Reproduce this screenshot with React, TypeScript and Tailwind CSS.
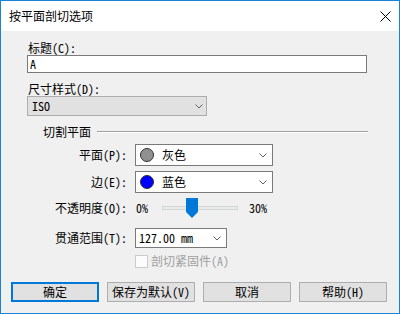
import React from "react";

const mono = "font-['Noto_Sans_Mono_CJK_SC','Noto_Sans_CJK_SC',monospace]";

function Chevron({ className = "" }: { className?: string }) {
  return (
    <svg width="8" height="5" viewBox="0 0 8 5" className={className}>
      <path d="M0.5 0.5 L4 4 L7.5 0.5" fill="none" stroke="#606060" strokeWidth="1" />
    </svg>
  );
}

function ColorCombo({ color, label }: { color: string; label: string }) {
  return (
    <div className="ml-[8px] flex h-[22px] w-[138px] items-center border border-[#7a7a7a] bg-white pl-[4px] pr-[5px]">
      <span
        className="h-[14px] w-[14px] rounded-full border border-[#303030]"
        style={{ backgroundColor: color }}
      />
      <span className="ml-[8px] flex-1 text-[12px] leading-[14px]">{label}</span>
      <Chevron />
    </div>
  );
}

export default function App() {
  return (
    <div
      className={`flex h-[314px] w-[400px] flex-col border border-[#1883d7] bg-[#f0f0f0] text-black ${mono}`}
    >
      {/* Title bar */}
      <div className="flex h-[30px] items-center justify-between bg-white pl-[8px] pr-[8px]">
        <span className="font-['Noto_Sans_CJK_SC',sans-serif] text-[12px] leading-[16px]">
          按平面剖切选项
        </span>
        <svg width="11" height="11" viewBox="0 0 11 11">
          <path d="M0.5 0.5 L10.5 10.5 M10.5 0.5 L0.5 10.5" stroke="#000" strokeWidth="1" />
        </svg>
      </div>

      {/* Form */}
      <div className="flex flex-col pl-[26px] pr-[32px] text-[12px]">
        <div className="mt-[9px] h-[15px] pl-[1px] leading-[15px]">标题(C):</div>
        <div className="flex h-[18px] items-center border border-[#7a7a7a] bg-white px-[2px] leading-[14px]">
          A
        </div>

        <div className="mt-[8px] h-[15px] pl-[1px] leading-[15px]">尺寸样式(D):</div>
        <div className="flex h-[20px] w-[180px] items-center justify-between border border-[#adadad] bg-[#e1e1e1] pl-[4px] pr-[3px] leading-[14px]">
          <span>ISO</span>
          <Chevron />
        </div>

        {/* Group header */}
        <div className="mt-[8px] flex h-[16px] items-center pl-[16px]">
          <span className="leading-[16px]">切割平面</span>
          <div className="ml-[6px] mr-[-1px] h-[2px] flex-1 border-t border-b border-t-[#a0a0a0] border-b-white" />
        </div>

        <div className="mt-[4px] flex items-center">
          <span className="w-[100px] text-right leading-[16px]">平面(P):</span>
          <ColorCombo color="#909090" label="灰色" />
        </div>

        <div className="mt-[5px] flex items-center">
          <span className="w-[100px] text-right leading-[16px]">边(E):</span>
          <ColorCombo color="#0000ff" label="蓝色" />
        </div>

        <div className="mt-[5px] flex h-[20px] items-center">
          <span className="w-[100px] text-right leading-[16px]">不透明度(O):</span>
          <span className="ml-[9px] w-[26px] leading-[16px]">0%</span>
          <div className="relative h-[4px] w-[76px] border border-[#d6d6d6] bg-[#e7eaea]">
            <svg
              width="12"
              height="20"
              viewBox="0 0 12 20"
              className="absolute left-[23px] top-[-9px]"
            >
              <path d="M0 0 H12 V14 L6 20 L0 14 Z" fill="#0078d7" />
            </svg>
          </div>
          <span className="ml-[11px] leading-[16px]">30%</span>
        </div>

        <div className="mt-[10px] flex items-center">
          <span className="w-[100px] text-right leading-[16px]">贯通范围(T):</span>
          <div className="ml-[8px] flex h-[20px] w-[92px] items-center justify-between border border-[#7a7a7a] bg-white pl-[3px] pr-[5px] leading-[14px]">
            <span>127.00 mm</span>
            <Chevron />
          </div>
        </div>

        <div className="mt-[5px] flex items-center pl-[108px] text-[#a0a0a0]">
          <span className="h-[13px] w-[13px] border border-[#cccccc] bg-[#fcfcfc]" />
          <span className="ml-[3px] leading-[16px]">剖切紧固件(A)</span>
        </div>
      </div>

      {/* Buttons */}
      <div className="mt-[13px] flex gap-[8px] pl-[10px] text-[12px]">
        <button className="h-[20px] w-[88px] border-2 border-[#0078d7] bg-[#e1e1e1] leading-[14px]">
          确定
        </button>
        <button className="h-[20px] w-[88px] border border-[#adadad] bg-[#e1e1e1] leading-[14px]">
          保存为默认(V)
        </button>
        <button className="h-[20px] w-[88px] border border-[#adadad] bg-[#e1e1e1] leading-[14px]">
          取消
        </button>
        <button className="h-[20px] w-[88px] border border-[#adadad] bg-[#e1e1e1] leading-[14px]">
          帮助(H)
        </button>
      </div>
    </div>
  );
}
